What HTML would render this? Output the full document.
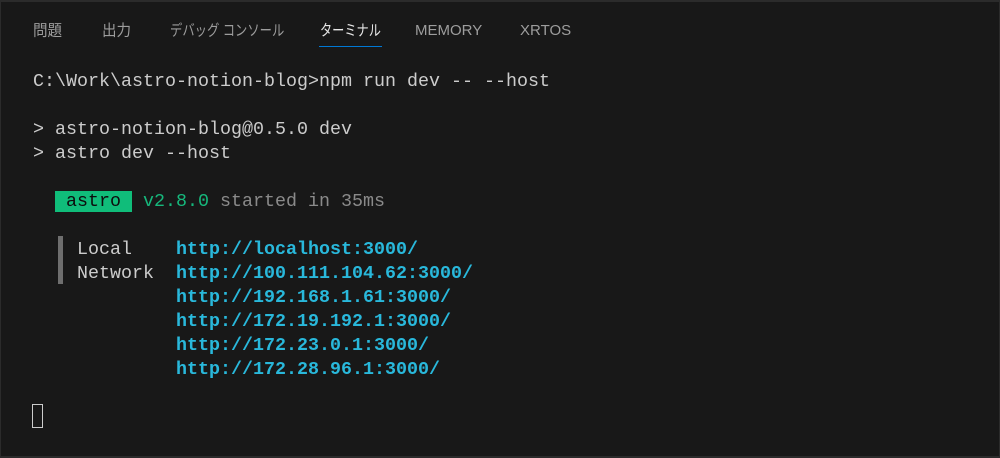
<!DOCTYPE html>
<html><head><meta charset="utf-8"><style>
html,body{margin:0;padding:0;}
body{width:1000px;height:458px;background:#181818;position:relative;overflow:hidden;}
.frame{position:absolute;left:0;top:0;width:998px;height:454px;border-left:1px solid #2b2b2b;border-right:1px solid #2b2b2b;border-top:2px solid #2b2b2b;border-bottom:2px solid #2b2b2b;box-sizing:content-box;}
.tabs{position:absolute;top:20px;left:0;font-family:"Liberation Sans","Noto Sans CJK JP",sans-serif;font-size:14px;color:#9d9d9d;}
.tab{position:absolute;top:0;white-space:nowrap;line-height:20px;transform-origin:0 50%;transform:scale(1.04,1.08);}
.lat{font-size:15px;top:1px;transform:none;}
.act{color:#e7e7e7;}
.ul{position:absolute;left:319px;top:46px;width:63px;height:1px;background:#0078d4;}
.term{position:absolute;left:33px;top:70px;font-family:"Liberation Mono",monospace;font-size:18.33px;line-height:24px;color:#cccccc;white-space:pre;}
.l{height:24px;}
.b{color:#29b8db;font-weight:bold;}
.g{color:#16b87c;}
.d{color:#8a8a8a;}
.badge{background:#10bd7a;color:#0d0d0d;}
.bar{position:absolute;left:58px;top:236px;width:5px;height:48px;background:#6e6e6e;}
.cur{position:absolute;left:32px;top:404px;width:9px;height:22px;border:1px solid #cccccc;}
</style></head><body>
<div class="frame"></div>
<div class="tabs">
<span class="tab" style="left:33px">問題</span>
<span class="tab" style="left:102px">出力</span>
<span class="tab" style="left:170px;transform:scale(0.88,1.08)">デバッグ コンソール</span>
<span class="tab act" style="left:320px;transform:scale(0.87,1.08)">ターミナル</span>
<span class="tab lat" style="left:415px">MEMORY</span>
<span class="tab lat" style="left:520px">XRTOS</span>
</div>
<div class="ul"></div>
<div class="term"><div class="l">C:\Work\astro-notion-blog&gt;npm run dev -- --host</div><div class="l"></div><div class="l">&gt; astro-notion-blog@0.5.0 dev</div><div class="l">&gt; astro dev --host</div><div class="l"></div><div class="l">  <span class="badge"> astro </span> <span class="g">v2.8.0</span> <span class="d">started in 35ms</span></div><div class="l"></div><div class="l">    Local    <span class="b">http://localhost:3000/</span></div><div class="l">    Network  <span class="b">http://100.111.104.62:3000/</span></div><div class="l">             <span class="b">http://192.168.1.61:3000/</span></div><div class="l">             <span class="b">http://172.19.192.1:3000/</span></div><div class="l">             <span class="b">http://172.23.0.1:3000/</span></div><div class="l">             <span class="b">http://172.28.96.1:3000/</span></div></div>
<div class="bar"></div>
<div class="cur"></div>
</body></html>
